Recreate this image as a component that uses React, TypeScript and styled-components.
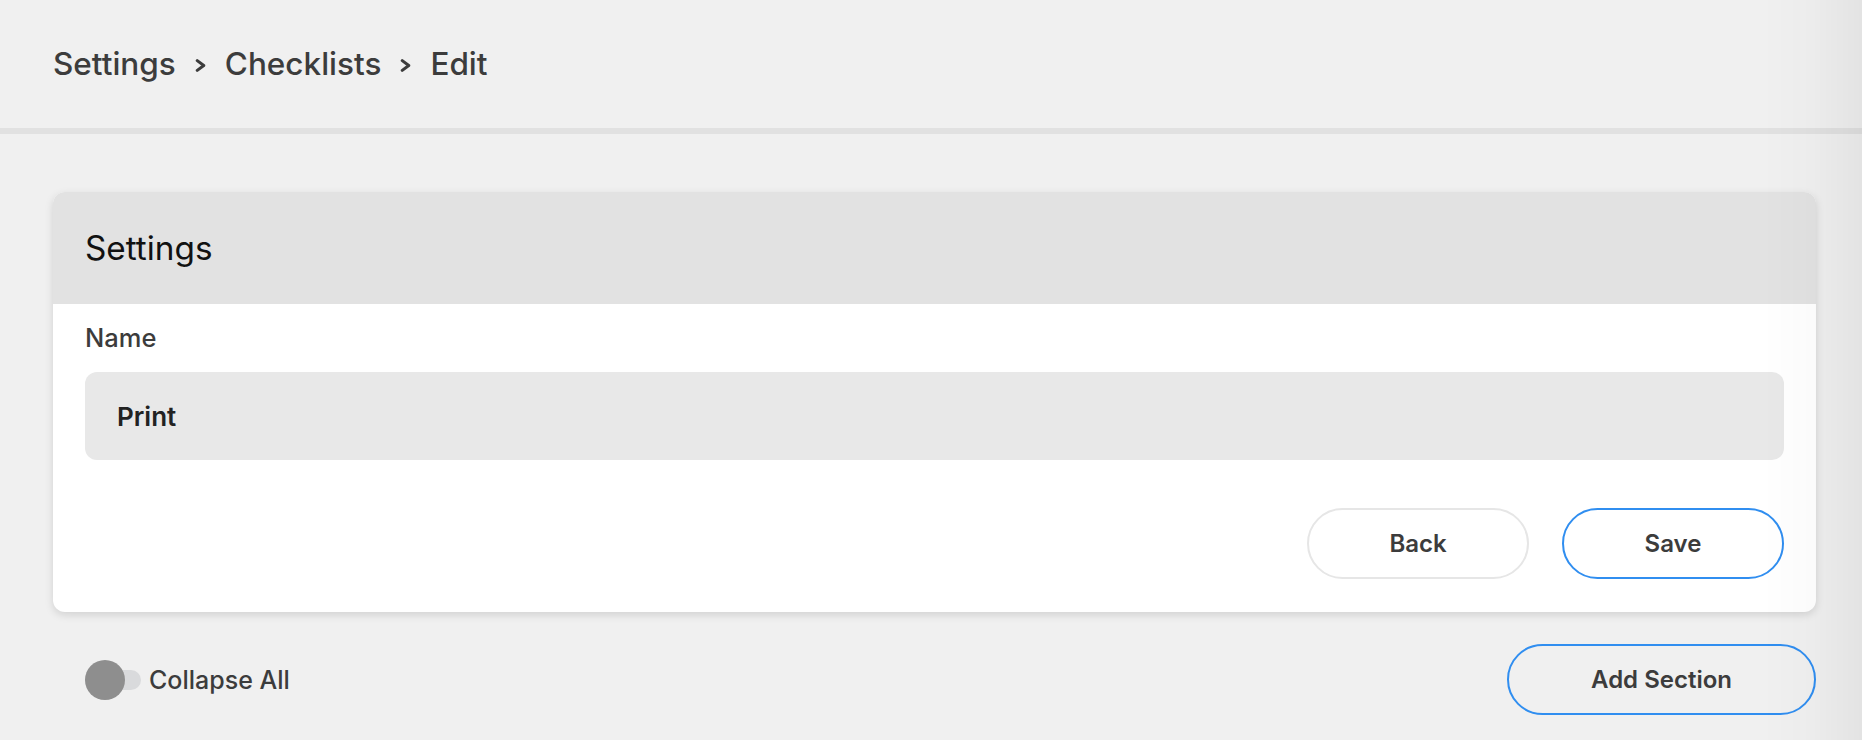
import React from "react";
import styled, { createGlobalStyle } from "styled-components";

const GlobalStyle = createGlobalStyle`
  html, body {
    margin: 0;
    padding: 0;
    background: #f0f0f0;
  }
  body {
    font-family: Inter, "Noto Sans", sans-serif;
    color: #3c3c3c;
    overflow: hidden;
  }
  * {
    box-sizing: border-box;
  }
`;

const Page = styled.div`
  min-height: 740px;
  background: #f0f0f0;
`;

const EdgeShade = styled.div`
  position: fixed;
  top: 0;
  right: 0;
  bottom: 0;
  width: 100px;
  pointer-events: none;
  background: linear-gradient(
    to right,
    rgba(0, 0, 0, 0) 0%,
    rgba(0, 0, 0, 0.015) 50%,
    rgba(0, 0, 0, 0.05) 100%
  );
  z-index: 10;
`;

const TopBar = styled.header`
  height: 134px;
  border-bottom: 6px solid #e1e1e1;
  display: flex;
  align-items: center;
  padding: 0 53px;
`;

const Breadcrumb = styled.nav`
  display: flex;
  align-items: center;
  gap: 18px;
  font-size: 31.5px;
  font-weight: 500;
  color: #3c3c3c;
`;

const Crumb = styled.span`
  line-height: 38px;
`;

const Sep = styled.svg`
  width: 13px;
  height: 13px;
  margin-top: 2px;
`;

const Main = styled.main`
  padding: 58px 46px 0 53px;
`;

const Card = styled.section`
  background: #fff;
  border-radius: 12px;
  box-shadow: 0 3px 8px rgba(0, 0, 0, 0.13);
  overflow: hidden;
`;

const CardHeader = styled.div`
  height: 112px;
  background: #e2e2e2;
  display: flex;
  align-items: center;
  padding: 0 32px;
  font-size: 33.3px;
  font-weight: 400;
  color: #111;
`;

const CardBody = styled.div`
  padding: 18px 32px 33px;
`;

const Label = styled.label`
  display: block;
  font-size: 25.5px;
  line-height: 31px;
  font-weight: 500;
  color: #3c3c3c;
`;

const Input = styled.div`
  margin-top: 19px;
  height: 88px;
  border-radius: 12px;
  background: #e8e8e8;
  display: flex;
  align-items: center;
  padding: 0 32px;
  font-size: 26px;
  font-weight: 600;
  color: #222;
`;

const Actions = styled.div`
  margin-top: 48px;
  display: flex;
  justify-content: flex-end;
  gap: 33px;
`;

const Button = styled.button<{ $primary?: boolean; $width?: number }>`
  width: ${(p) => p.$width ?? 222}px;
  height: 71px;
  border-radius: 36px;
  border: 2px solid ${(p) => (p.$primary ? "#308ef0" : "#e6e6e6")};
  background: transparent;
  font-family: Inter, "Noto Sans", sans-serif;
  font-size: 24px;
  font-weight: 600;
  color: #3c3c3c;
  cursor: pointer;
`;

const BottomRow = styled.div`
  margin-top: 32px;
  display: flex;
  align-items: center;
  justify-content: space-between;
  padding-left: 32px;
`;

const ToggleWrap = styled.div`
  display: flex;
  align-items: center;
  gap: 8px;
`;

const Track = styled.div`
  position: relative;
  width: 56px;
  height: 20px;
  border-radius: 10px;
  background: #d9dadc;
`;

const Knob = styled.div`
  position: absolute;
  left: 0;
  top: -10px;
  width: 40px;
  height: 40px;
  border-radius: 50%;
  background: #8e8e8e;
`;

const ToggleLabel = styled.span`
  font-size: 25px;
  font-weight: 500;
  color: #3c3c3c;
`;

const Chevron = () => (
  <Sep viewBox="0 0 12 12" fill="none">
    <path
      d="M3 1.5 L9 6 L3 10.5"
      stroke="#3c3c3c"
      strokeWidth="2.8"
      strokeLinecap="round"
      strokeLinejoin="round"
    />
  </Sep>
);

export default function App() {
  return (
    <Page>
      <GlobalStyle />
      <TopBar>
        <Breadcrumb>
          <Crumb>Settings</Crumb>
          <Chevron />
          <Crumb>Checklists</Crumb>
          <Chevron />
          <Crumb>Edit</Crumb>
        </Breadcrumb>
      </TopBar>
      <Main>
        <Card>
          <CardHeader>Settings</CardHeader>
          <CardBody>
            <Label>Name</Label>
            <Input>Print</Input>
            <Actions>
              <Button>Back</Button>
              <Button $primary>Save</Button>
            </Actions>
          </CardBody>
        </Card>
        <BottomRow>
          <ToggleWrap>
            <Track>
              <Knob />
            </Track>
            <ToggleLabel>Collapse All</ToggleLabel>
          </ToggleWrap>
          <Button $primary $width={309}>
            Add Section
          </Button>
        </BottomRow>
      </Main>
      <EdgeShade />
    </Page>
  );
}
